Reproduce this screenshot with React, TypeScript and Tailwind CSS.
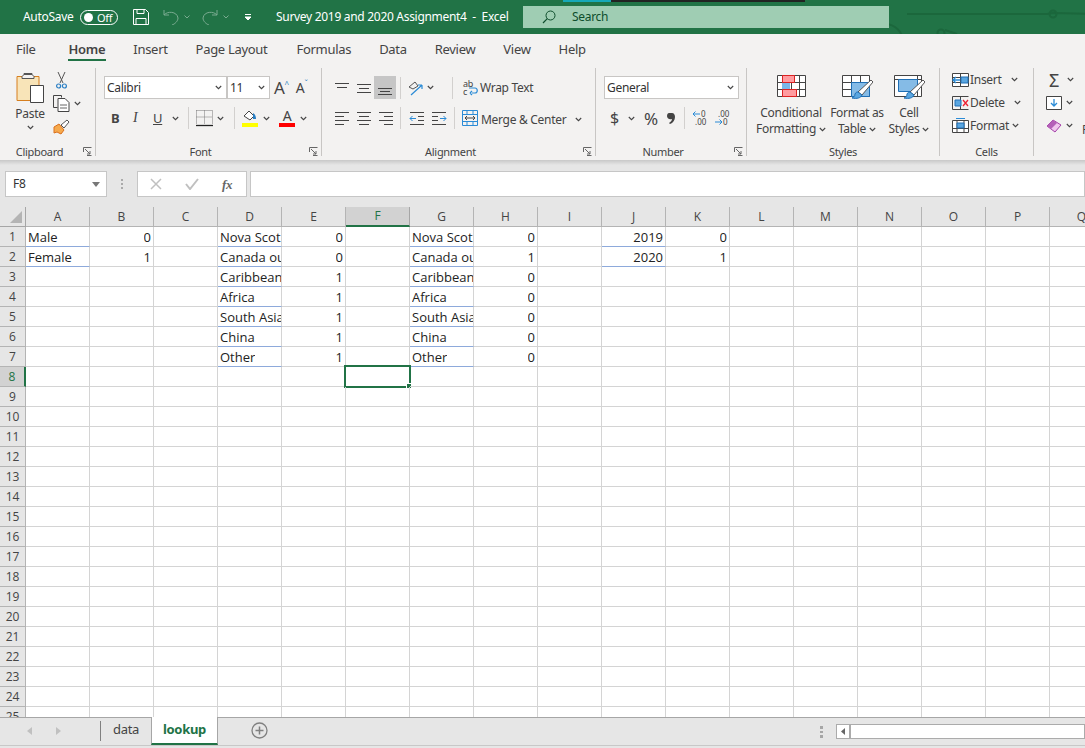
import type { ReactNode } from 'react';

const ui = "font-['Noto_Sans',sans-serif] tracking-[-0.3px]";
const columns = ['A', 'B', 'C', 'D', 'E', 'F', 'G', 'H', 'I', 'J', 'K', 'L', 'M', 'N', 'O', 'P', 'Q'];
const rows = Array.from({ length: 25 }, (_, i) => i + 1);

// cell content by address
const regions = ['Nova Scot', 'Canada ou', 'Caribbean', 'Africa', 'South Asia', 'China', 'Other'];
const eValues = [0, 0, 1, 1, 1, 1, 1];
const hValues = [0, 1, 0, 0, 0, 0, 0];
const cells: Record<string, string> = { A1: 'Male', A2: 'Female', B1: '0', B2: '1', J1: '2019', J2: '2020', K1: '0', K2: '1' };
regions.forEach((r, i) => {
  cells[`D${i + 1}`] = r;
  cells[`G${i + 1}`] = r;
  cells[`E${i + 1}`] = String(eValues[i]);
  cells[`H${i + 1}`] = String(hValues[i]);
});
const rightAligned = new Set(['B', 'E', 'H', 'J', 'K']);
const tableCols: Record<string, number> = { A: 2, D: 7, G: 7, J: 2 };

function Chevron({ className = '' }: { className?: string }) {
  return (
    <svg width="7" height="5" viewBox="0 0 7 5" className={`shrink-0 ${className}`}>
      <path d="M.8 1 3.5 3.7 6.2 1" fill="none" stroke="#444" strokeWidth="1.1" />
    </svg>
  );
}

function Launcher() {
  return (
    <svg width="9" height="9" viewBox="0 0 9 9" className="absolute right-[3px] bottom-[4px]">
      <path d="M.5 5V.5h8M8.5 8.5H4M2 2l5 5M7 4v3H4" fill="none" stroke="#666" />
    </svg>
  );
}

function Group({ width, label, children }: { width: string; label: string; children: ReactNode }) {
  const launcher = label !== 'Styles' && label !== 'Cells';
  return (
    <div className={`flex shrink-0 ${width}`}>
      <div className="relative flex min-w-0 flex-1 flex-col">
        <div className="min-h-0 flex-1">{children}</div>
        <div className={`mb-[1px] flex h-[16px] items-center justify-center text-[11px] leading-none text-[#444] ${launcher ? 'pr-[16px]' : ''}`}>{label}</div>
        {launcher && <Launcher />}
      </div>
      <div className="mt-[1px] mb-[4px] w-px bg-[#c8c6c4]" />
    </div>
  );
}

function VSep({ className = '' }: { className?: string }) {
  return <div className={`h-[22px] w-px shrink-0 bg-[#d2d0ce] ${className}`} />;
}

function Lines({ d }: { d: string }) {
  return (
    <svg width="16" height="16" viewBox="0 0 16 16" className="shrink-0">
      <path d={d} fill="none" stroke="#444" />
    </svg>
  );
}

function PasteIcon() {
  return (
    <svg width="28" height="32" viewBox="0 0 28 32">
      <path d="M1 4.5h22v24H1z" fill="#f8e4b8" stroke="#d67f1f" />
      <path d="M8 4.5h8V1.5H8z" fill="#f3f2f1" stroke="#555" />
      <path d="M6 4.5l2-2h8l2 2v2H6z" fill="#f3f2f1" stroke="#555" />
      <path d="M14.5 13.5h13v17h-13z" fill="#fff" stroke="#444" />
    </svg>
  );
}

function ScissorsIcon() {
  return (
    <svg width="11" height="17" viewBox="0 0 11 17">
      <path d="M2 0l5 11M9 0 4 11" fill="none" stroke="#555" />
      <circle cx="2.6" cy="14" r="2" fill="none" stroke="#2a7fc4" strokeWidth="1.2" />
      <circle cx="8.4" cy="14" r="2" fill="none" stroke="#2a7fc4" strokeWidth="1.2" />
    </svg>
  );
}

function CopyIcon() {
  return (
    <svg width="17" height="17" viewBox="0 0 17 17">
      <path d="M.5.5h8v2M.5.5v12h4" fill="none" stroke="#444" />
      <path d="M5 3.5h7l4 4v9H5z" fill="#fff" stroke="#444" />
      <path d="M7 10h7M7 13h7" stroke="#666" />
    </svg>
  );
}

function BrushIcon() {
  return (
    <svg width="17" height="16" viewBox="0 0 17 16">
      <path d="M1 8 6 5l5 6-3 4-4-2-3 1z" fill="#f6a94c" stroke="#d9701c" />
      <path d="M8 6l6-5 2 2-5 6z" fill="#fff" stroke="#555" />
    </svg>
  );
}

function TableBrush() {
  return (
    <>
      <path d="M30 6l2 2-11 13-4-3z" fill="#fff" stroke="#555" />
      <path d="M17 18l4 3c-1 3-5 4-10 3 2-1 3-2 3-4 1-2 2-2 3-2z" fill="#5aa6e0" stroke="#1f6fb5" />
    </>
  );
}

function Combo({ label, className }: { label: string; className: string }) {
  return (
    <div className={`flex h-[23px] items-center justify-between border border-[#c8c6c4] bg-white pl-[2px] pr-[2px] ${className}`}>
      <span className="text-[12px] leading-none text-[#333]">{label}</span>
      <Chevron className="mr-[2px]" />
    </div>
  );
}

function BigButton({ icon, top, bottom, className }: { icon: ReactNode; top: string; bottom: string; className: string }) {
  return (
    <div className={`flex shrink-0 flex-col items-center ${className}`}>
      <div className="flex h-[24px] items-center">{icon}</div>
      <div className="mt-[6px] whitespace-nowrap text-[12px] leading-[16px] text-[#444]">{top}</div>
      <div className="flex items-center gap-[3px] whitespace-nowrap text-[12px] leading-[16px] text-[#444]">
        {bottom}
        <Chevron />
      </div>
    </div>
  );
}

function GridIcon({ children }: { children: ReactNode }) {
  return (
    <svg width="32" height="26" viewBox="0 0 32 26">
      {children}
    </svg>
  );
}

function CellAction({ icon, label, gap }: { icon: ReactNode; label: string; gap: string }) {
  return (
    <div className="flex h-[23px] items-center">
      <div className="flex w-[19px] justify-center">{icon}</div>
      <span className="text-[12px] leading-none text-[#444]">{label}</span>
      <Chevron className={gap} />
    </div>
  );
}

function TitleBar() {
  return (
    <div className="relative flex h-[34px] items-center overflow-hidden bg-[#217346] text-white">
      <svg width="200" height="34" viewBox="0 0 200 34" className="absolute right-0 top-0">
        <g fill="none" stroke="#1b673c" strokeWidth="2">
          <path d="M22 14h140l6-1 40 1" />
          <circle cx="168" cy="14" r="3.5" />
          <circle cx="0" cy="42" r="18" />
          <circle cx="56" cy="33" r="3.5" />
          <path d="M60 30l12 4" />
        </g>
      </svg>
      <div className="absolute left-[563px] top-0 flex h-[2px]">
        <div className="w-[48px] bg-[#17a8b8]" />
        <div className="w-[194px] bg-[#222]" />
      </div>
      <span className="ml-[23px] w-[50px] whitespace-nowrap text-[12px] leading-none">AutoSave</span>
      <div className="ml-[7px] flex h-[15px] w-[38px] items-center rounded-full border border-white px-[3px]">
        <div className="h-[9px] w-[9px] rounded-full bg-white" />
        <span className="ml-[4px] text-[11px] leading-none">Off</span>
      </div>
      <svg width="16" height="16" viewBox="0 0 16 16" className="ml-[15px] shrink-0">
        <path d="M.5.5h12l3 3v12H.5zM4 .5v4h7v-4M3 15.5v-6h10v6" fill="none" stroke="#fff" />
      </svg>
      <svg width="16" height="16" viewBox="0 0 16 16" className="ml-[14px] shrink-0 opacity-40">
        <path d="M1 1v5h5M1 6c3-4 13-4 14 3 0 3-3 6-6 7" fill="none" stroke="#fff" />
      </svg>
      <svg width="6" height="4" viewBox="0 0 6 4" className="ml-[5px] shrink-0 opacity-40">
        <path d="M.5.5 3 3 5.500.5" fill="none" stroke="#fff" />
      </svg>
      <svg width="16" height="16" viewBox="0 0 16 16" className="ml-[12px] shrink-0 opacity-40">
        <path d="M15 1v5h-5M15 6C12 2 2 2 1 9c0 3 3 6 6 7" fill="none" stroke="#fff" />
      </svg>
      <svg width="6" height="4" viewBox="0 0 6 4" className="ml-[5px] shrink-0 opacity-40">
        <path d="M.5.5 3 3 5.500.5" fill="none" stroke="#fff" />
      </svg>
      <svg width="8" height="7" viewBox="0 0 8 7" className="ml-[15px] shrink-0">
        <path d="M1 .5h6M1 3l3 3 3-3z" fill="#fff" stroke="#fff" />
      </svg>
      <span className="ml-[24px] w-[247px] whitespace-nowrap text-[12px] leading-none">Survey 2019 and 2020 Assignment4&nbsp; -&nbsp; Excel</span>
      <div className="relative flex h-[22px] w-[366px] items-center bg-[#9fcdb3] pl-[19px] text-[#0e4d2c]">
        <svg width="14" height="14" viewBox="0 0 14 14" className="shrink-0">
          <circle cx="8.500" cy="5.500" r="4.500" fill="none" stroke="#0e4d2c" />
          <path d="M5.300 8.700 1 13" stroke="#0e4d2c" strokeWidth="1.200" />
        </svg>
        <span className="ml-[16px] text-[12px] leading-none">Search</span>
      </div>
    </div>
  );
}

function MenuTabs() {
  const tabs: [string, string][] = [
    ['Insert', 'ml-[27px]'],
    ['Page Layout', 'ml-[28px]'],
    ['Formulas', 'ml-[29px]'],
    ['Data', 'ml-[28px]'],
    ['Review', 'ml-[28px]'],
    ['View', 'ml-[28px]'],
    ['Help', 'ml-[28px]'],
  ];
  return (
    <div className="flex h-[33px] items-start bg-[#f3f2f1] pt-[7px] text-[13px] leading-[17px] text-[#444]">
      <span className="ml-[16px]">File</span>
      <div className="ml-[32px] h-[20px] border-b-2 border-[#217346] px-[1px] font-semibold">Home</div>
      {tabs.map(([name, margin]) => (
        <span key={name} className={margin}>
          {name}
        </span>
      ))}
    </div>
  );
}

function Ribbon() {
  return (
    <div className="flex h-[93px] overflow-hidden bg-[#f3f2f1] text-[#444]">
      <Group width="w-[96px]" label="Clipboard">
        <div className="flex">
          <div className="ml-[15px] flex w-[30px] flex-col items-center pt-[5px]">
            <PasteIcon />
            <span className="mt-[2px] text-[12px] leading-[16px]">Paste</span>
            <Chevron className="mt-[3px]" />
          </div>
          <div className="ml-[8px] flex flex-col pt-[5px]">
            <div className="ml-[3px] h-[17px]"><ScissorsIcon /></div>
            <div className="mt-[6px] flex items-center gap-[4px]"><CopyIcon /><Chevron /></div>
            <div className="mt-[7px]"><BrushIcon /></div>
          </div>
        </div>
      </Group>

      <Group width="w-[226px]" label="Font">
        <div className="flex items-center pl-[8px] pt-[9px]">
          <Combo label="Calibri" className="w-[123px]" />
          <Combo label="11" className="w-[43px]" />
          <span className="ml-[4px] text-[17px] leading-none">A</span>
          <span className="mb-[8px] text-[8px] leading-none text-[#2a7fc4]">^</span>
          <span className="ml-[7px] text-[14px] leading-none">A</span>
          <span className="mb-[8px] text-[8px] leading-none text-[#2a7fc4]">ˇ</span>
        </div>
        <div className="mt-[7px] flex h-[24px] items-center pl-[15px]">
          <span className="w-[20px] text-[13px] font-bold leading-none">B</span>
          <span className="w-[21px] pl-[2px] font-['Liberation_Serif',serif] text-[14px] italic leading-none">I</span>
          <span className="w-[15px] pl-[1px] text-[13px] leading-none underline">U</span>
          <Chevron className="ml-[5px]" />
          <VSep className="ml-[9px]" />
          <svg width="17" height="17" viewBox="0 0 17 17" className="ml-[7px] shrink-0">
            <path d="M.5.5h16M.5.5v13M16.500.5v13M8.500.5v13M.5 7h16" fill="none" stroke="#777" strokeDasharray="1 1" />
            <path d="M0 15.500h17" stroke="#222" strokeWidth="1.300" />
          </svg>
          <Chevron className="ml-[4px]" />
          <VSep className="ml-[10px]" />
          <div className="ml-[7px] flex w-[16px] flex-col items-center">
            <svg width="14" height="12" viewBox="0 0 14 12">
              <path d="M1 6l5-5 5 5-4 4z" fill="#fff" stroke="#444" />
              <path d="M10 3c2 1 3 3 3 6h-3z" fill="#2a7fc4" />
            </svg>
            <div className="mt-[1px] h-[4px] w-[16px] bg-[#ffff00]" />
          </div>
          <Chevron className="ml-[5px]" />
          <div className="ml-[9px] flex w-[16px] flex-col items-center">
            <span className="h-[12px] text-[14px] leading-[12px]">A</span>
            <div className="mt-[1px] h-[4px] w-[16px] bg-[#ff0000]" />
          </div>
          <Chevron className="ml-[5px]" />
        </div>
      </Group>

      <Group width="w-[274px]" label="Alignment">
        <div className="mt-[9px] flex h-[23px] items-center pl-[12px]">
          <Lines d="M1 3.500h14M3 7.500h10" />
          <div className="ml-[6px]"><Lines d="M1 4.500h14M3 8.500h10M1 12.500h14" /></div>
          <div className="ml-[2px] flex h-[23px] w-[22px] items-center justify-center bg-[#c6c6c6]">
            <Lines d="M1 8.500h14M3 11.500h10M1 14.500h14" />
          </div>
          <VSep className="ml-[4px]" />
          <svg width="16" height="16" viewBox="0 0 16 16" className="ml-[7px] shrink-0">
            <path d="M1 7l6-5 3 4-5 3z" fill="none" stroke="#555" />
            <path d="M3 15 14 5M14 5h-4M14 5v4" fill="none" stroke="#2a8bd6" strokeWidth="1.200" />
          </svg>
          <Chevron className="ml-[3px]" />
          <VSep className="ml-[18px]" />
          <svg width="17" height="16" viewBox="0 0 17 16" className="ml-[9px] shrink-0">
            <text x="1" y="7" fontSize="9" fill="#444">ab</text>
            <text x="1" y="15" fontSize="9" fill="#444">c</text>
            <path d="M10 13h3c3 0 3-5 0-5H7M8 13l2-2M8 13l2 2" fill="none" stroke="#2a8bd6" strokeWidth="1.200" />
          </svg>
          <span className="ml-[1px] text-[12px] leading-none">Wrap Text</span>
        </div>
        <div className="mt-[7px] flex h-[24px] items-center pl-[12px]">
          <Lines d="M1 2.500h14M1 6.500h9M1 10.500h14M1 14.500h9" />
          <div className="ml-[6px]"><Lines d="M1 2.500h14M3 6.500h10M1 10.500h14M3 14.500h10" /></div>
          <div className="ml-[6px]"><Lines d="M1 2.500h14M6 6.500h9M1 10.500h14M6 14.500h9" /></div>
          <VSep className="ml-[6px]" />
          <svg width="16" height="16" viewBox="0 0 16 16" className="ml-[8px] shrink-0">
            <path d="M1 2.500h14M9 6.500h6M9 10.500h6M1 14.500h14" stroke="#444" />
            <path d="M7 8.500H1M3.500 6 1 8.500 3.500 11" fill="none" stroke="#2a8bd6" />
          </svg>
          <svg width="16" height="16" viewBox="0 0 16 16" className="ml-[6px] shrink-0">
            <path d="M1 2.500h14M1 6.500h6M1 10.500h6M1 14.500h14" stroke="#444" />
            <path d="M9 8.500h6M12.500 6 15 8.500 12.500 11" fill="none" stroke="#2a8bd6" />
          </svg>
          <VSep className="ml-[7px]" />
          <svg width="16" height="16" viewBox="0 0 16 16" className="ml-[7px] shrink-0">
            <path d="M.5.5h15v15H.5zM.5 4.500h15M.5 11.500h15M5 .5v4M11 .5v4M5 11.500v4M11 11.500v4" fill="none" stroke="#2a8bd6" />
            <path d="M3 8h10M3 8l2-2M3 8l2 2M13 8l-2-2M13 8l-2 2" fill="none" stroke="#444" />
          </svg>
          <span className="ml-[3px] mt-[3px] text-[12px] leading-none">Merge &amp; Center</span>
          <Chevron className="ml-[9px] mt-[2px]" />
        </div>
      </Group>

      <Group width="w-[151px]" label="Number">
        <div className="pl-[8px] pt-[9px]">
          <Combo label="General" className="w-[135px]" />
        </div>
        <div className="mt-[7px] flex h-[24px] items-center pl-[14px]">
          <span className="w-[8px] text-[16px] leading-none">$</span>
          <Chevron className="ml-[10px]" />
          <span className="ml-[9px] text-[17px] leading-none">%</span>
          <svg width="8" height="11" viewBox="0 0 8 11" className="ml-[9px] shrink-0">
            <path d="M2 0h3c2 0 3 2 3 4 0 3-2 6-5 7l-1-1c2-1 3-3 3-4-3 1-5-1-5-3s1-3 2-3z" fill="#444" />
          </svg>
          <VSep className="ml-[9px]" />
          <svg width="16" height="16" viewBox="0 0 16 16" className="ml-[7px] shrink-0">
            <path d="M8 4H1M3.500 1.500 1 4l2.500 2.500" fill="none" stroke="#2a8bd6" />
            <text x="9" y="7" fontSize="8" fill="#444" letterSpacing="0">0</text>
            <text x="3" y="15" fontSize="8" fill="#444" letterSpacing="0">.00</text>
          </svg>
          <svg width="16" height="16" viewBox="0 0 16 16" className="ml-[6px] shrink-0">
            <text x="4" y="7" fontSize="8" fill="#444" letterSpacing="0">.00</text>
            <path d="M1 12h7M5.500 9.500 8 12l-2.500 2.500" fill="none" stroke="#2a8bd6" />
            <text x="9" y="15" fontSize="8" fill="#444" letterSpacing="0">0</text>
          </svg>
        </div>
      </Group>

      <Group width="w-[193px]" label="Styles">
        <div className="flex pt-[8px]">
          <BigButton
            className="ml-[9px] w-[70px]"
            top="Conditional"
            bottom="Formatting"
            icon={
              <GridIcon>
                <path d="M2.500 1.500h28v21h-28zM2.500 8.500h28M2.500 15.500h28M10.500 1.500v21M16.500 1.500v21M24.500 1.500v21" fill="#fff" stroke="#444" />
                <path d="M7.500 1.500h12v7h-12zM7.500 15.500h14v7h-14z" fill="#ff9ca0" stroke="#d22" />
                <path d="M7 9h8v6H7z" fill="#7ab7e8" />
              </GridIcon>
            }
          />
          <BigButton
            className="ml-[-1px] w-[64px]"
            top="Format as"
            bottom="Table"
            icon={
              <GridIcon>
                <path d="M1.500 1.500h27v21h-27zM1.500 8.500h27M1.500 15.500h27M10.500 1.500v21M19.500 1.500v21" fill="#fff" stroke="#444" />
                <path d="M10.500 8.500h18v14h-18z" fill="#85bbe6" stroke="#1f6fb5" />
                <TableBrush />
              </GridIcon>
            }
          />
          <BigButton
            className="ml-[-12px] w-[64px]"
            top="Cell"
            bottom="Styles"
            icon={
              <GridIcon>
                <path d="M1.500 1.500h27v21h-27zM1.500 5.500h27M24.500 1.500v21" fill="#fff" stroke="#444" />
                <path d="M5.500 5.500h19v12h-19z" fill="#85bbe6" stroke="#1f6fb5" />
                <TableBrush />
              </GridIcon>
            }
          />
        </div>
      </Group>

      <Group width="w-[94px]" label="Cells">
        <div className="flex flex-col pl-[11px] pt-[1px]">
          <CellAction
            gap="ml-[9px]"
            label="Insert"
            icon={
              <svg width="17" height="14" viewBox="0 0 17 14">
                <path d="M.5.500h16v13H.5zM8.500.500v13M.5 4.500h16M.5 9.500h16" fill="#fff" stroke="#444" />
                <path d="M9 4h7v6H9z" fill="#5aa6e0" stroke="#1f6fb5" />
                <path d="M8 7H1M4 4 1 7l3 3" fill="none" stroke="#2a8bd6" strokeWidth="1.300" />
              </svg>
            }
          />
          <CellAction
            gap="ml-[9px]"
            label="Delete"
            icon={
              <svg width="17" height="14" viewBox="0 0 17 14">
                <path d="M.5.500h16M.5 13.500h16M.5.500v13M8.500.500V4M8.500 10v3.500" fill="none" stroke="#444" />
                <path d="M3 4h6v6H3z" fill="#5aa6e0" stroke="#1f6fb5" />
                <path d="M11 4l5 6M16 4l-5 6" stroke="#e23" strokeWidth="1.300" />
              </svg>
            }
          />
          <CellAction
            gap="ml-[3px]"
            label="Format"
            icon={
              <svg width="17" height="15" viewBox="0 0 17 15">
                <path d="M.5 2.500h16v12H.5zM5 2.500v12M12 2.500v12M.5 10.500h16" fill="#fff" stroke="#444" />
                <path d="M5 5h7v5H5z" fill="#5aa6e0" stroke="#1f6fb5" />
                <path d="M4 .5h9" stroke="#2a8bd6" />
              </svg>
            }
          />
        </div>
      </Group>

      <div className="relative flex-1 overflow-hidden pl-[12px] pt-[1px]">
        <div className="flex h-[23px] items-center">
          <span className="w-[16px] text-center text-[18px] leading-none">Σ</span>
          <Chevron className="ml-[5px]" />
        </div>
        <div className="flex h-[23px] items-center">
          <svg width="16" height="14" viewBox="0 0 16 14" className="shrink-0">
            <path d="M.5.500h15v13H.5z" fill="#fff" stroke="#444" />
            <path d="M8 3v7M5 7l3 3 3-3" fill="none" stroke="#2a8bd6" strokeWidth="1.300" />
          </svg>
          <Chevron className="ml-[4px]" />
        </div>
        <div className="flex h-[23px] items-center">
          <svg width="16" height="14" viewBox="0 0 16 14" className="shrink-0">
            <path d="M1 7l6-6 8 5-6 7z" fill="#f0c6ee" stroke="#a33fa8" />
            <path d="M1 7l6-6 4 3-6 6z" fill="#b460b8" />
          </svg>
          <Chevron className="ml-[4px]" />
          <span className="ml-[9px] mt-[8px] shrink-0 text-[12px] leading-none">F</span>
        </div>
      </div>
    </div>
  );
}

function FormulaBar() {
  return (
    <div className="flex h-[42px] items-start bg-[#e6e6e6] pt-[6px]">
      <div className="ml-[5px] flex h-[26px] w-[102px] items-center justify-between border border-[#c6c6c6] bg-white pl-[7px] pr-[6px] text-[12px] text-[#333]">
        F8
        <svg width="8" height="5" viewBox="0 0 8 5"><path d="M0 0h8L4 5z" fill="#777" /></svg>
      </div>
      <div className="ml-[14px] mt-[8px] flex flex-col gap-[2px]">
        <div className="h-[2px] w-[2px] bg-[#aaa]" />
        <div className="h-[2px] w-[2px] bg-[#aaa]" />
        <div className="h-[2px] w-[2px] bg-[#aaa]" />
      </div>
      <div className="ml-[14px] flex h-[26px] w-[110px] items-center border border-[#c6c6c6] bg-white">
        <svg width="12" height="12" viewBox="0 0 12 12" className="ml-[12px]">
          <path d="M1 1l10 10M11 1 1 11" stroke="#c0c0c0" strokeWidth="1.500" />
        </svg>
        <svg width="14" height="12" viewBox="0 0 14 12" className="ml-[23px]">
          <path d="M1 6l4 5 8-10" fill="none" stroke="#c0c0c0" strokeWidth="2" />
        </svg>
        <span className="ml-[23px] font-['Liberation_Serif',serif] text-[13px] font-bold italic leading-none text-[#666]">fx</span>
      </div>
      <div className="ml-[3px] h-[26px] flex-1 border border-[#c6c6c6] bg-white" />
    </div>
  );
}

function Sheet() {
  return (
    <div className="h-[510px] overflow-hidden bg-white">
      <div className="grid w-[1114px] auto-rows-[20px] grid-cols-[26px_repeat(17,64px)] font-['Open_Sans',sans-serif] text-[13px] tracking-normal">
        <div className="flex items-end justify-end border-r border-b border-[#a6a6a6] bg-[#e6e6e6] pr-[3px] pb-[3px]">
          <svg width="12" height="12" viewBox="0 0 12 12"><path d="M12 0v12H0z" fill="#b4b4b4" /></svg>
        </div>
        {columns.map((c) =>
          c === 'F' ? (
            <div key={c} className="flex items-center justify-center border-r border-b-2 border-r-[#a6a6a6] border-b-[#217346] bg-[#d2d2d2] text-[12px] text-[#217346]">
              {c}
            </div>
          ) : (
            <div key={c} className="flex items-center justify-center border-r border-b border-[#b4b4b4] bg-[#e6e6e6] text-[12px] text-[#444]">
              {c}
            </div>
          ),
        )}
        {rows.map((r) => (
          <Row key={r} r={r} />
        ))}
      </div>
    </div>
  );
}

function Row({ r }: { r: number }) {
  return (
    <>
      {r === 8 ? (
        <div className="flex items-center justify-center border-r-2 border-b border-r-[#217346] border-b-[#b4b4b4] bg-[#d2d2d2] pt-px text-[12px] text-[#217346]">{r}</div>
      ) : (
        <div className="flex items-center justify-center border-r border-b border-[#b4b4b4] bg-[#e6e6e6] pt-px text-[12px] text-[#444]">{r}</div>
      )}
      {columns.map((c) => {
        const value = cells[`${c}${r}`];
        const inTable = tableCols[c] !== undefined && r <= tableCols[c];
        return (
          <div
            key={c}
            className={`relative flex items-center overflow-visible border-r border-b border-r-[#d4d4d4] pt-px ${inTable ? 'border-b-[#8eaadb]' : 'border-b-[#d4d4d4]'} ${rightAligned.has(c) ? 'justify-end pr-[2px]' : 'pl-[2px]'}`}
          >
            {value && <span className="block max-w-[61px] overflow-hidden whitespace-nowrap leading-[16px] text-[#222]">{value}</span>}
            {c === 'F' && r === 8 && (
              <div className="absolute -left-[2px] -top-[2px] h-[23px] w-[67px] border-2 border-[#217346]">
                <div className="absolute -right-[3px] -bottom-[3px] h-[6px] w-[6px] border border-white bg-[#217346]" />
              </div>
            )}
          </div>
        );
      })}
    </>
  );
}

function SheetTabs() {
  return (
    <div className="flex h-[28px] items-stretch border-t border-[#a6a6a6] bg-[#e6e6e6]">
      <svg width="5" height="8" viewBox="0 0 5 8" className="ml-[27px] mt-[9px]"><path d="M5 0v8L0 4z" fill="#c0c0c0" /></svg>
      <svg width="5" height="8" viewBox="0 0 5 8" className="ml-[24px] mt-[9px]"><path d="M0 0v8l5-4z" fill="#c0c0c0" /></svg>
      <div className="ml-[39px] mt-[3px] h-[20px] w-px bg-[#808080]" />
      <div className="flex w-[50px] items-center justify-center pb-[4px] text-[13px] text-[#444]">data</div>
      <div className="-mt-px flex w-[67px] items-center justify-center border-x border-b-2 border-x-[#a6a6a6] border-b-[#217346] bg-white text-[13px] font-bold text-[#217346]">
        lookup
      </div>
      <svg width="17" height="17" viewBox="0 0 17 17" className="ml-[33px] mt-[4px] shrink-0">
        <circle cx="8.500" cy="8.500" r="7.500" fill="none" stroke="#808080" strokeWidth="1.300" />
        <path d="M8.500 4.500v8M4.500 8.500h8" stroke="#808080" strokeWidth="1.500" />
      </svg>
      <div className="ml-[552px] mt-[8px] flex flex-col gap-[2px]">
        <div className="h-[3px] w-[3px] bg-[#a6a6a6]" />
        <div className="h-[2px] w-[3px] bg-[#a6a6a6]" />
        <div className="h-[3px] w-[3px] bg-[#a6a6a6]" />
      </div>
      <div className="ml-[13px] mt-[6px] flex h-[15px] flex-1 border border-[#ababab] bg-white">
        <div className="flex w-[14px] items-center justify-center border-r-2 border-[#ababab]">
          <svg width="4" height="7" viewBox="0 0 4 7"><path d="M4 0v7L0 3.500z" fill="#666" /></svg>
        </div>
      </div>
    </div>
  );
}

export default function App() {
  return (
    <div className={`h-[748px] w-[1085px] overflow-hidden bg-[#e6e6e6] ${ui}`}>
      <TitleBar />
      <MenuTabs />
      <Ribbon />
      <div className="h-[5px] bg-gradient-to-b from-[#c8c8c8] to-[#e6e6e6]" />
      <FormulaBar />
      <Sheet />
      <SheetTabs />
      <div className="h-[3px] border-t border-[#c8c8c8] bg-[#e6e6e6]" />
    </div>
  );
}
